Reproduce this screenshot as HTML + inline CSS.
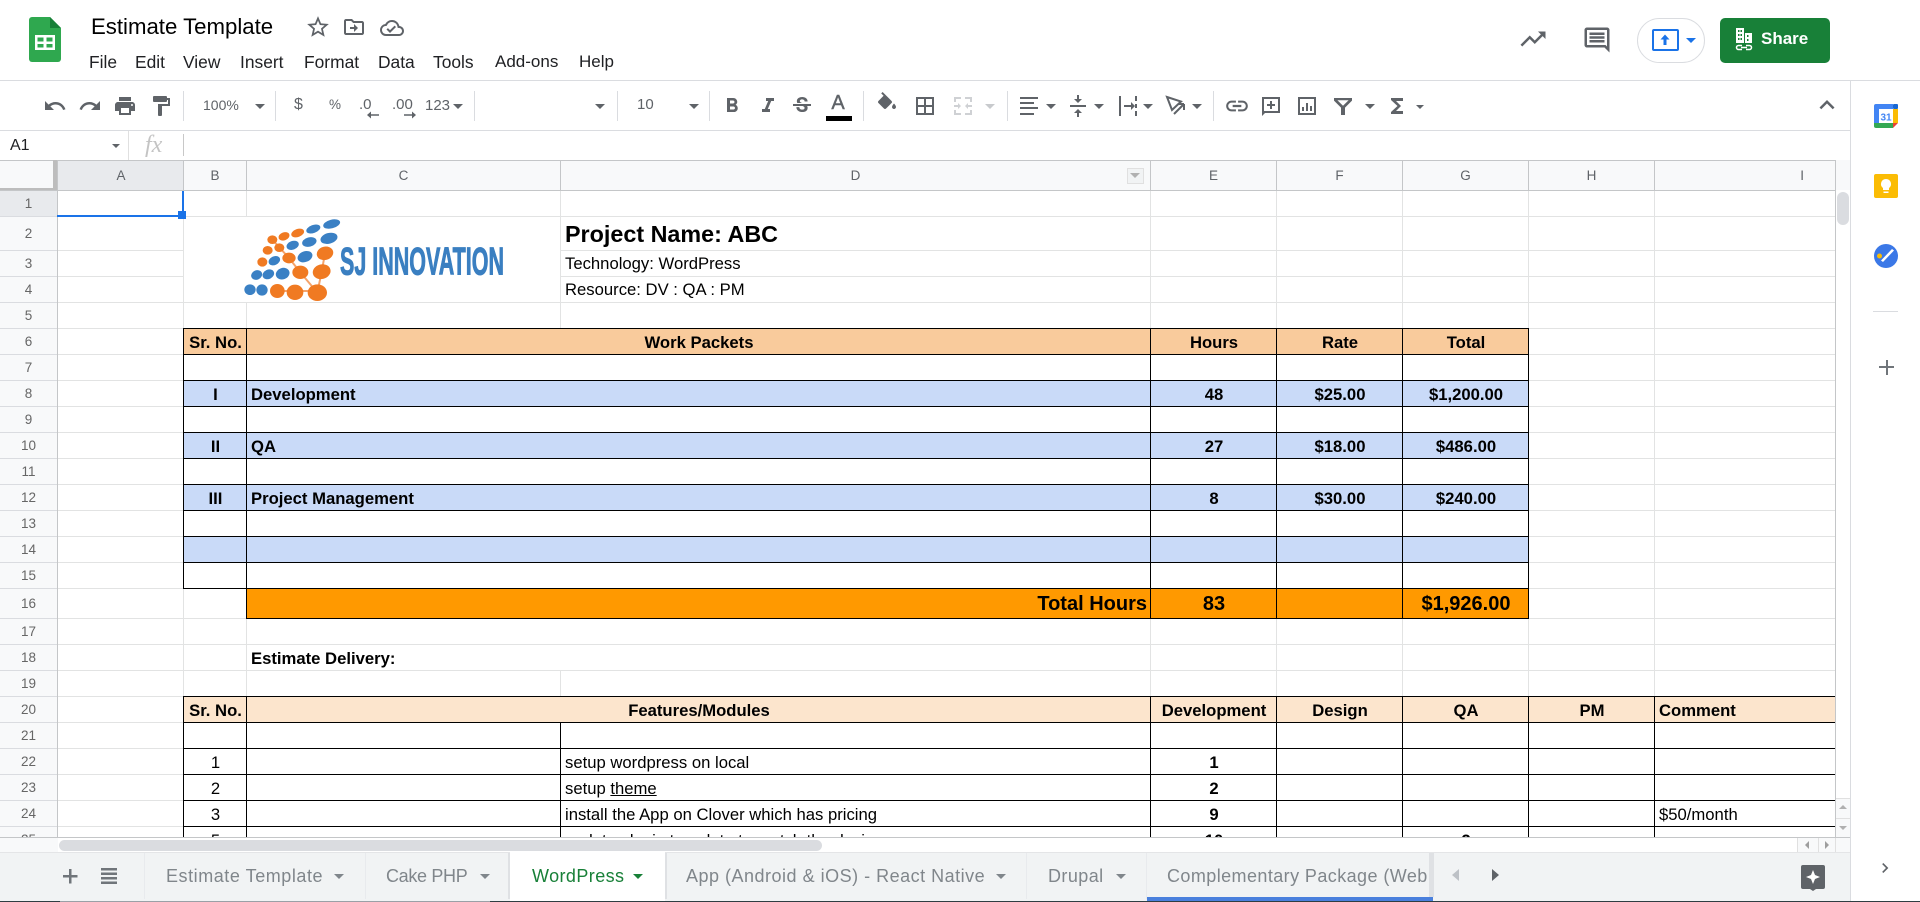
<!DOCTYPE html>
<html lang="en"><head><meta charset="utf-8"><title>Estimate Template</title>
<style>
html,body{margin:0;padding:0;width:1920px;height:902px;overflow:hidden;background:#fff;font-family:"Liberation Sans",sans-serif;color:#000}
div,span,svg{position:absolute;display:block}
u{text-decoration:underline}
.n{white-space:nowrap}
.m{top:51px;height:22px;line-height:22px;font-size:17.4px;color:#202124;white-space:nowrap}
.i{fill:#5f6368}
.a{width:0;height:0;border-left:5px solid transparent;border-right:5px solid transparent;border-top:5px solid #5f6368}
.s{top:91px;width:1px;height:30px;background:#dadce0}
.tb{font-size:14.5px;color:#5f6368;white-space:nowrap;line-height:20px;height:20px}
.ch{top:161px;height:29px;line-height:29px;text-align:center;font-size:13.5px;color:#5f6368;text-indent:1px}
.rh{left:0;width:57px;text-align:center;font-size:13.5px;color:#666}
.c{font-size:16.67px;white-space:nowrap;text-align:center;color:#000;text-indent:2px}
.b{font-weight:700}
.c.l{text-align:left;text-indent:0}
.r26{height:26px;line-height:29px}
.tab{top:864px;height:24px;line-height:24px;font-size:18px;letter-spacing:.42px;color:#80868b;white-space:nowrap}
</style></head><body>

<!-- header -->
<svg style="left:29px;top:17px" width="32" height="45" viewBox="0 0 32 45"><path d="M3 0H21L32 11V42a3 3 0 0 1-3 3H3a3 3 0 0 1-3-3V3a3 3 0 0 1 3-3z" fill="#2fa84f"/><path d="M21 0L32 11H21z" fill="#188038"/><path d="M6 18h20v15H6zM8.500 20.500v4h6v-4zm9 0v4h6v-4zM8.500 27v3.500h6V27zm9 0v3.500h6V27z" fill="#fff" fill-rule="evenodd"/></svg>
<div class="n" style="left:91px;top:14px;height:26px;line-height:26px;font-size:22.2px;color:#000">Estimate Template</div>
<svg style="left:305px;top:14px" width="26" height="26" viewBox="0 0 24 24" class="i"><path d="M22 9.240l-7.190-.62L12 2 9.190 8.630 2 9.240l5.460 4.730L5.820 21 12 17.270 18.180 21l-1.630-7.030L22 9.240zM12 15.400l-3.760 2.270 1-4.280-3.320-2.880 4.380-.38L12 6.100l1.710 4.040 4.380.38-3.320 2.880 1 4.280L12 15.400z"/></svg>
<svg style="left:342px;top:15px" width="24" height="24" viewBox="0 0 24 24" class="i"><path d="M20 6h-8l-2-2H4c-1.100 0-2 .9-2 2v12c0 1.100.9 2 2 2h16c1.100 0 2-.9 2-2V8c0-1.100-.9-2-2-2zm0 12H4V6h5.170l2 2H20v10zm-8-1l4-4-4-4v3H8v2h4z"/></svg>
<svg style="left:380px;top:16px" width="24" height="24" viewBox="0 0 24 24" class="i"><path d="M19.350 10.040A7.490 7.490 0 0012 4C9.110 4 6.600 5.640 5.350 8.040A5.994 5.994 0 000 14c0 3.310 2.690 6 6 6h13c2.760 0 5-2.240 5-5 0-2.640-2.050-4.780-4.650-4.960zM19 18H6c-2.210 0-4-1.790-4-4 0-2.050 1.530-3.760 3.560-3.970l1.070-.11.5-.95A5.469 5.469 0 0112 6c2.620 0 4.880 1.860 5.390 4.430l.3 1.500 1.530.11A2.980 2.980 0 0122 15c0 1.650-1.350 3-3 3zm-9-3.820l-2.090-2.090L6.500 13.500 10 17l6.010-6.010-1.410-1.410z"/></svg>
<div class="m" style="left:89px">File</div><div class="m" style="left:135px">Edit</div><div class="m" style="left:183px">View</div><div class="m" style="left:240px">Insert</div><div class="m" style="left:304px">Format</div><div class="m" style="left:378px">Data</div><div class="m" style="left:433px">Tools</div><div class="m" style="left:495px;font-size:17px">Add-ons</div><div class="m" style="left:579px;font-size:17px">Help</div>

<svg style="left:1518px;top:24px" width="30" height="30" viewBox="0 0 24 24" class="i"><path d="M16 6l2.290 2.290-4.880 4.880-4-4L2 16.590 3.410 18l6-6 4 4 6.300-6.290L22 12V6z"/></svg>
<svg style="left:1582px;top:25px" width="30" height="30" viewBox="0 0 24 24" class="i"><path fill-rule="evenodd" d="M22 4c0-1.100-.9-2-2-2H4c-1.100 0-2 .9-2 2v12c0 1.100.9 2 2 2h14l4 4V4zM20 4v13.170L18.830 16H4V4h16zM6 12h12v2H6zM6 9h12v2H6zM6 6h12v2H6z"/></svg>
<div style="left:1637px;top:18px;width:66px;height:43px;border:1px solid #dadce0;border-radius:23px"></div>
<div style="left:1652px;top:29px;width:23px;height:18px;border:2px solid #1a73e8;border-radius:2px"></div>
<svg style="left:1657px;top:32px" width="16" height="16" viewBox="0 0 16 16"><path d="M8 2.500L3.500 7.500H6.500V13H9.500V7.500H12.500z" fill="#1a73e8"/></svg>
<div class="a" style="left:1686px;top:38px;border-top-color:#1a73e8"></div>
<div style="left:1720px;top:18px;width:110px;height:45px;background:#188038;border-radius:5px"></div>
<svg style="left:1735px;top:27px" width="18" height="24" viewBox="0 0 18 24"><path fill="#fff" fill-rule="evenodd" d="M1 1h8v15H1zM3 3v2h1.500V3zm2.500 0v2H7V3zM3 7v2h1.500V7zm2.500 0v2H7V7zM3 11v2h1.500v-2zm2.500 0v2H7v-2zM10 6h7v10h-7zM12 8v2h1.500V8zm0 4v2h1.500v-2z"/><path fill="none" stroke="#fff" stroke-width="1.500" d="M7 18.500H3.500a2 2 0 0 0 0 4H7M11 18.500h3.500a2 2 0 0 1 0 4H11M6 20.500h6"/></svg>
<div class="n" style="left:1761px;top:28px;height:22px;line-height:22px;font-size:17px;font-weight:700;color:#fff">Share</div>

<div style="left:0;top:80px;width:1920px;height:1px;background:#dadce0"></div>

<!-- toolbar -->
<svg style="left:43px;top:94px" width="24" height="24" viewBox="0 0 24 24" class="i"><path d="M12.500 8c-2.650 0-5.050.99-6.900 2.600L2 7v9h9l-3.620-3.620c1.390-1.160 3.160-1.880 5.120-1.880 3.540 0 6.550 2.310 7.600 5.500l2.370-.78C21.080 11.030 17.150 8 12.500 8z"/></svg>
<svg style="left:78px;top:94px" width="24" height="24" viewBox="0 0 24 24" class="i"><path d="M18.400 10.600C16.550 8.990 14.150 8 11.500 8c-4.650 0-8.580 3.030-9.960 7.220L3.900 16c1.050-3.190 4.050-5.500 7.600-5.500 1.950 0 3.730.72 5.120 1.880L13 16h9V7l-3.600 3.600z"/></svg>
<svg style="left:113px;top:94px" width="24" height="24" viewBox="0 0 24 24" class="i"><path d="M19 8H5c-1.660 0-3 1.340-3 3v6h4v4h12v-4h4v-6c0-1.660-1.340-3-3-3zm-3 11H8v-5h8v5zm3-7c-.55 0-1-.45-1-1s.45-1 1-1 1 .45 1 1-.45 1-1 1zm-1-9H6v4h12V3z"/></svg>
<svg style="left:149px;top:94px" width="24" height="24" viewBox="0 0 24 24" class="i"><path d="M18 4V3c0-.55-.45-1-1-1H5c-.55 0-1 .45-1 1v4c0 .55.45 1 1 1h12c.55 0 1-.45 1-1V6h1v4H9v11c0 .55.45 1 1 1h2c.55 0 1-.45 1-1v-9h8V4h-3z"/></svg>
<div class="s" style="left:183px"></div>
<div class="tb" style="left:203px;top:95px;font-size:14px">100%</div><div class="a" style="left:255px;top:104px"></div>
<div class="s" style="left:275px"></div>
<div class="tb" style="left:294px;top:95px;font-size:16px">$</div>
<div class="tb" style="left:329px;top:95px;font-size:13.5px">%</div>
<div class="tb" style="left:359px;top:95px;font-size:15px">.0</div>
<svg style="left:367px;top:111px" width="12" height="8" viewBox="0 0 12 8"><path d="M12 3.200H4V.5L0 4l4 3.500V4.800h8z" fill="#5f6368"/></svg>
<div class="tb" style="left:392px;top:95px;font-size:15px">.00</div>
<svg style="left:404px;top:111px" width="12" height="8" viewBox="0 0 12 8"><path d="M0 3.200H8V.5L12 4 8 7.500V4.800H0z" fill="#5f6368"/></svg>
<div class="tb" style="left:425px;top:96px;font-size:15px">123</div><div class="a" style="left:453px;top:104px"></div>
<div class="s" style="left:474px"></div>
<div class="a" style="left:595px;top:104px"></div>
<div class="s" style="left:617px"></div>
<div class="tb" style="left:637px;top:95px;font-size:15px">10</div><div class="a" style="left:689px;top:104px"></div>
<div class="s" style="left:709px"></div>
<svg style="left:720px;top:94px" width="24" height="24" viewBox="0 0 24 24" class="i"><path d="M15.600 10.790c.97-.67 1.650-1.770 1.650-2.790 0-2.260-1.750-4-4-4H7v14h7.040c2.090 0 3.710-1.700 3.710-3.790 0-1.520-.86-2.820-2.150-3.420zM10 6.500h3c.83 0 1.500.67 1.500 1.500s-.67 1.500-1.500 1.500h-3v-3zm3.500 9H10v-3h3.500c.83 0 1.500.67 1.500 1.500s-.67 1.500-1.500 1.500z"/></svg>
<svg style="left:756px;top:94px" width="24" height="24" viewBox="0 0 24 24" class="i"><path d="M10 4v3h2.210l-3.420 8H6v3h8v-3h-2.210l3.420-8H18V4z"/></svg>
<svg style="left:790px;top:94px" width="24" height="24" viewBox="0 0 24 24" class="i"><path d="M6.850 7.080C6.850 4.370 9.450 3 12.240 3c1.640 0 3 .49 3.900 1.280.77.65 1.460 1.730 1.460 3.240h-3.010c0-.31-.05-.59-.15-.85-.29-.86-1.200-1.280-2.250-1.280-1.860 0-2.340 1.020-2.340 1.700 0 .48.25.88.74 1.210.38.25.77.48 1.410.7H7.390c-.21-.34-.54-.89-.54-1.920zM21 12v-2H3v2h9.620c1.150.45 1.960.75 1.960 1.970 0 1-.81 1.670-2.280 1.670-1.540 0-2.930-.54-2.930-2.510H6.400c0 .55.08 1.130.24 1.580.81 2.290 3.290 3.300 5.670 3.300 2.270 0 5.300-.89 5.300-4.050 0-.3-.01-1.160-.48-1.940H21V12z"/></svg>
<div class="tb" style="left:828px;top:92px;width:20px;text-align:center;font-size:20px;line-height:22px;height:22px;-webkit-text-stroke:.4px #5f6368">A</div>
<div style="left:826px;top:116px;width:26px;height:5px;background:#000"></div>
<div class="s" style="left:863px"></div>
<svg style="left:875px;top:92px" width="24" height="24" viewBox="0 0 24 24" class="i"><path d="M16.560 8.940L7.620 0 6.210 1.410l2.380 2.380-5.150 5.150c-.59.59-.59 1.540 0 2.120l5.500 5.500c.29.29.68.44 1.060.44s.77-.15 1.060-.44l5.500-5.500c.59-.58.59-1.530 0-2.120zM19 11.500s-2 2.170-2 3.500c0 1.100.9 2 2 2s2-.9 2-2c0-1.330-2-3.500-2-3.500z"/></svg>
<svg style="left:913px;top:94px" width="24" height="24" viewBox="0 0 24 24" class="i"><path d="M3 3v18h18V3H3zm8 16H5v-6h6v6zm0-8H5V5h6v6zm8 8h-6v-6h6v6zm0-8h-6V5h6v6z"/></svg>
<svg style="left:951px;top:94px" width="24" height="24" viewBox="0 0 24 24" fill="#cfd1d4"><path d="M3 3h7v2H5v3H3zM14 3h7v5h-2V5h-5zM3 16h2v3h5v2H3zM19 16h2v5h-7v-2h5zM3 11h4V9l3 3-3 3v-2H3zM21 13h-4v2l-3-3 3-3v2h4z"/></svg>
<div class="a" style="left:985px;top:104px;border-top-color:#c8cacd"></div>
<div class="s" style="left:1007px"></div>
<svg style="left:1017px;top:94px" width="24" height="24" viewBox="0 0 24 24" class="i"><path d="M3 3h18v2H3zM3 8h14v2H3zM3 13h18v2H3zM3 19h14v2H3z"/></svg>
<div class="a" style="left:1046px;top:104px"></div>
<svg style="left:1066px;top:94px" width="24" height="24" viewBox="0 0 24 24" class="i"><path d="M8 19h3v4h2v-4h3l-4-4-4 4zm8-14h-3V1h-2v4H8l4 4 4-4zM4 11v2h16v-2H4z"/></svg>
<div class="a" style="left:1094px;top:104px"></div>
<svg style="left:1116px;top:94px" width="24" height="24" viewBox="0 0 24 24" class="i"><path d="M3 2h2v20H3zM19 2h2v5h-2zM19 10h2v4h-2zM19 17h2v5h-2zM8 11h7V8l4 4-4 4v-3H8z"/></svg>
<div class="a" style="left:1143px;top:104px"></div>
<svg style="left:1163px;top:94px" width="24" height="24" viewBox="0 0 24 24" fill="none" stroke="#5f6368" stroke-width="2"><path d="M4 3l14 4.500-9 8.500zM11 20l10-10M21 10v6M21 10h-6"/></svg>
<div class="a" style="left:1192px;top:104px"></div>
<div class="s" style="left:1213px"></div>
<svg style="left:1224px;top:93px" width="26" height="26" viewBox="0 0 24 24" class="i"><path d="M3.900 12c0-1.710 1.390-3.100 3.100-3.100h4V7H7c-2.760 0-5 2.240-5 5s2.240 5 5 5h4v-1.900H7c-1.710 0-3.100-1.390-3.100-3.100zM8 13h8v-2H8v2zm9-6h-4v1.900h4c1.710 0 3.100 1.390 3.100 3.100s-1.390 3.100-3.100 3.100h-4V17h4c2.760 0 5-2.240 5-5s-2.240-5-5-5z"/></svg>
<svg style="left:1259px;top:94px" width="24" height="24" viewBox="0 0 24 24" class="i"><path fill-rule="evenodd" d="M3 3h18v16H6l-3 3zM5 5v12h14V5zM11 7h2v3h3v2h-3v3h-2v-3H8v-2h3z"/></svg>
<svg style="left:1295px;top:94px" width="24" height="24" viewBox="0 0 24 24" class="i"><path fill-rule="evenodd" d="M3 3h18v18H3zM5 5v14h14V5zM7 13h2v4H7zM11 9h2v8h-2zM15 12h2v5h-2z"/></svg>
<svg style="left:1331px;top:94px" width="24" height="24" viewBox="0 0 24 24" class="i"><path fill-rule="evenodd" d="M3 4h18v2.600l-7 7V21h-4v-7.400l-7-7zM6.400 6.200L12 11.800l5.600-5.600z"/></svg>
<div class="a" style="left:1365px;top:104px"></div>
<svg style="left:1385px;top:94px" width="24" height="24" viewBox="0 0 24 24" class="i"><path d="M18 4H6v2l6.500 6L6 18v2h12v-3h-7l5-5-5-5h7V4z"/></svg>
<div class="a" style="left:1416px;top:105px;border-left-width:4px;border-right-width:4px;border-top-width:4px"></div>
<svg style="left:1812px;top:90px" width="30" height="30" viewBox="0 0 24 24" class="i"><path d="M7.410 15.410L12 10.830l4.590 4.580L18 14l-6-6-6 6z"/></svg>

<div style="left:0;top:130px;width:1850px;height:1px;background:#dadce0"></div>
<!-- formula bar -->
<div class="n" style="left:10px;top:135px;height:22px;line-height:22px;font-size:16px;color:#202124">A1</div>
<div class="a" style="left:112px;top:144px;border-left-width:4px;border-right-width:4px;border-top-width:4px"></div>
<div style="left:128px;top:131px;width:1px;height:29px;background:#e0e0e0"></div>
<div class="n" style="left:145px;top:131px;height:28px;line-height:28px;font-family:'Liberation Serif',serif;font-style:italic;font-size:24px;color:#c4c4c4">fx</div>
<div style="left:183px;top:134px;width:1px;height:22px;background:#c8c8c8"></div>

<!-- column headers -->
<div style="left:0;top:160px;width:1850px;height:30px;background:#f8f9fa"></div>
<div style="left:58px;top:160px;width:125px;height:30px;background:#e8eaed"></div>
<div class="ch" style="left:58px;width:125px">A</div><div class="ch" style="left:183px;width:63px">B</div><div class="ch" style="left:246px;width:314px">C</div><div class="ch" style="left:560px;width:590px">D</div><div class="ch" style="left:1150px;width:126px">E</div><div class="ch" style="left:1276px;width:126px">F</div><div class="ch" style="left:1402px;width:126px">G</div><div class="ch" style="left:1528px;width:126px">H</div><div class="ch" style="left:1654px;width:181px;text-align:right;text-indent:-1px"><span style="position:static;display:inline;margin-right:31px">I</span></div>
<div style="left:1127px;top:168px;width:15px;height:14px;border:1px solid #e0e0e0;background:#f1f3f4"></div>
<div class="a" style="left:1130px;top:173px;border-top-color:#b0b0b0;border-left-width:5px;border-right-width:5px"></div>

<!-- grid bg -->
<div style="left:0;top:190px;width:58px;height:647px;background:#f8f9fa"></div>
<div style="left:0;top:190px;width:57px;height:26px;background:#e8eaed"></div>
<!-- fills -->
<div style="left:183px;top:328px;width:1345px;height:26px;background:#f9cb9c"></div>
<div style="left:183px;top:380px;width:1345px;height:26px;background:#c9daf8"></div>
<div style="left:183px;top:432px;width:1345px;height:26px;background:#c9daf8"></div>
<div style="left:183px;top:484px;width:1345px;height:26px;background:#c9daf8"></div>
<div style="left:183px;top:536px;width:1345px;height:26px;background:#c9daf8"></div>
<div style="left:246px;top:588px;width:1282px;height:30px;background:#ff9900"></div>
<div style="left:183px;top:696px;width:1652px;height:26px;background:#fce5cd"></div>

<svg style="left:0;top:0" width="1920" height="902" viewBox="0 0 1920 902" fill="none">
<path stroke="#e2e3e3" d="M58 216.500H1836M58 250.500H183M560 250.500H1836M58 276.500H183M560 276.500H1836M58 302.500H1836M58 328.500H1836M1528 354.500H1836M58 354.500H183M1528 380.500H1836M58 380.500H183M58 406.500H183M1528 406.500H1836M58 432.500H183M1528 432.500H1836M58 458.500H183M1528 458.500H1836M58 484.500H183M1528 484.500H1836M58 510.500H183M1528 510.500H1836M58 536.500H183M1528 536.500H1836M58 562.500H183M1528 562.500H1836M58 588.500H246M1528 588.500H1836M58 618.500H1836M58 644.500H1836M58 670.500H1836M58 696.500H1836M58 722.500H183M58 748.500H183M58 774.500H183M58 800.500H183M58 826.500H183"/>
<path stroke="#e2e3e3" d="M183.500 190V696M246.500 190V216M246.500 302V328M246.500 618V696M560.500 190V328M560.500 670V696M1150.500 190V328M1276.500 190V328M1402.500 190V328M1528.500 190V696M1654.500 190V696M1150.500 618V696M1276.500 618V696M1402.500 618V696"/>
<path stroke="#c4c6c8" d="M0 160.500H1850M57.500 160V837M0 190.500H1836M183.500 160V190M246.500 160V190M560.500 160V190M1150.500 160V190M1276.500 160V190M1402.500 160V190M1528.500 160V190M1654.500 160V190M1835.500 160V837M0 837.500H1850"/>
<path stroke="#dadce0" d="M0 216.500H57M0 250.500H57M0 276.500H57M0 302.500H57M0 328.500H57M0 354.500H57M0 380.500H57M0 406.500H57M0 432.500H57M0 458.500H57M0 484.500H57M0 510.500H57M0 536.500H57M0 562.500H57M0 588.500H57M0 618.500H57M0 644.500H57M0 670.500H57M0 696.500H57M0 722.500H57M0 748.500H57M0 774.500H57M0 800.500H57M0 826.500H57"/>
<path stroke="#000" d="M183 328.500H1529M183 354.500H1529M183 380.500H1529M183 406.500H1529M183 432.500H1529M183 458.500H1529M183 484.500H1529M183 510.500H1529M183 536.500H1529M183 562.500H1529M183 588.500H1529M246 618.500H1529M183.500 328V589M246.500 328V619M1150.500 328V619M1276.500 328V619M1402.500 328V619M1528.500 328V619"/>
<path stroke="#000" d="M183 696.500H1835M183 722.500H1835M183 748.500H1835M183 774.500H1835M183 800.500H1835M183 826.500H1835M183.500 696V837M246.500 696V837M560.500 722V837M1150.500 696V837M1276.500 696V837M1402.500 696V837M1528.500 696V837M1654.500 696V837"/>
</svg>

<!-- row numbers -->
<div class="rh" style="top:190px;height:26px;line-height:27px">1</div><div class="rh" style="top:216px;height:34px;line-height:35px">2</div><div class="rh" style="top:250px;height:26px;line-height:27px">3</div><div class="rh" style="top:276px;height:26px;line-height:27px">4</div><div class="rh" style="top:302px;height:26px;line-height:27px">5</div><div class="rh" style="top:328px;height:26px;line-height:27px">6</div><div class="rh" style="top:354px;height:26px;line-height:27px">7</div><div class="rh" style="top:380px;height:26px;line-height:27px">8</div><div class="rh" style="top:406px;height:26px;line-height:27px">9</div><div class="rh" style="top:432px;height:26px;line-height:27px">10</div><div class="rh" style="top:458px;height:26px;line-height:27px">11</div><div class="rh" style="top:484px;height:26px;line-height:27px">12</div><div class="rh" style="top:510px;height:26px;line-height:27px">13</div><div class="rh" style="top:536px;height:26px;line-height:27px">14</div><div class="rh" style="top:562px;height:26px;line-height:27px">15</div><div class="rh" style="top:588px;height:30px;line-height:31px">16</div><div class="rh" style="top:618px;height:26px;line-height:27px">17</div><div class="rh" style="top:644px;height:26px;line-height:27px">18</div><div class="rh" style="top:670px;height:26px;line-height:27px">19</div><div class="rh" style="top:696px;height:26px;line-height:27px">20</div><div class="rh" style="top:722px;height:26px;line-height:27px">21</div><div class="rh" style="top:748px;height:26px;line-height:27px">22</div><div class="rh" style="top:774px;height:26px;line-height:27px">23</div><div class="rh" style="top:800px;height:26px;line-height:27px">24</div>
<div style="left:0;top:826px;width:1836px;height:11px;overflow:hidden">
 <div class="rh" style="top:0;height:26px;line-height:27px">25</div>
 <div class="c r26" style="left:183px;width:63px">5</div>
 <div class="c r26 l" style="left:565px">update plugin template to match the design</div>
 <div class="c r26 b" style="left:1150px;width:126px">10</div>
 <div class="c r26 b" style="left:1402px;width:126px">2</div>
</div>

<!-- selection -->
<div style="left:57px;top:215px;width:127px;height:2px;background:#1a73e8"></div>
<div style="left:182px;top:191px;width:2px;height:25px;background:#1a73e8"></div>
<div style="left:178px;top:211px;width:8px;height:8px;background:#1a73e8"></div>
<div style="left:0;top:188px;width:57px;height:2px;background:#bdbdbd"></div>
<div style="left:53px;top:160px;width:4px;height:30px;background:#bdbdbd"></div>

<!-- logo -->
<svg style="left:230px;top:215px" width="300" height="90" viewBox="0 0 900 270">
<g stroke="#f5a36a" stroke-width="6" fill="none"><path d="M127 74L177 129L211 172L262 233M285 115L275 170L262 233M142 228H262"/></g>
<g fill="#3a80c4"><ellipse cx="305" cy="27" rx="26" ry="13" transform="rotate(-15 305 27)"/><ellipse cx="250" cy="42" rx="22" ry="12" transform="rotate(-20 250 42)"/><ellipse cx="297" cy="70" rx="26" ry="16" transform="rotate(-15 297 70)"/><ellipse cx="238" cy="81" rx="22" ry="14" transform="rotate(-15 238 81)"/><ellipse cx="188" cy="91" rx="19" ry="13" transform="rotate(-20 188 91)"/><ellipse cx="225" cy="125" rx="23" ry="16" transform="rotate(-20 225 125)"/><ellipse cx="133" cy="137" rx="18" ry="13" transform="rotate(-25 133 137)"/><ellipse cx="158" cy="176" rx="21" ry="17" transform="rotate(-20 158 176)"/><ellipse cx="115" cy="178" rx="18" ry="14" transform="rotate(-25 115 178)"/><ellipse cx="80" cy="180" rx="17" ry="14" transform="rotate(-25 80 180)"/><ellipse cx="96" cy="225" rx="17" ry="17"/><ellipse cx="60" cy="224" rx="17" ry="16"/></g>
<g fill="#f07a22"><ellipse cx="203" cy="54" rx="20" ry="12" transform="rotate(-20 203 54)"/><ellipse cx="162" cy="64" rx="17" ry="12" transform="rotate(-20 162 64)"/><ellipse cx="127" cy="74" rx="15" ry="13"/><ellipse cx="148" cy="98" rx="15" ry="13"/><ellipse cx="113" cy="106" rx="15" ry="13"/><ellipse cx="285" cy="115" rx="25" ry="20" transform="rotate(-15 285 115)"/><ellipse cx="177" cy="129" rx="20" ry="16"/><ellipse cx="97" cy="141" rx="15" ry="14"/><ellipse cx="275" cy="170" rx="27" ry="22" transform="rotate(-15 275 170)"/><ellipse cx="211" cy="172" rx="24" ry="20"/><ellipse cx="262" cy="233" rx="29" ry="25"/><ellipse cx="195" cy="232" rx="25" ry="23"/><ellipse cx="142" cy="228" rx="22" ry="21"/></g>
<text x="330" y="178" font-family="Liberation Sans" font-weight="700" font-size="116" fill="#3a7fc1" stroke="#3a7fc1" stroke-width="3" textLength="492" lengthAdjust="spacingAndGlyphs">SJ INNOVATION</text>
</svg>

<!-- header text -->
<div class="n b" style="left:565px;top:216px;height:34px;line-height:37px;font-size:23.33px">Project Name: ABC</div>
<div class="c l" style="left:565px;top:250px;height:26px;line-height:28px">Technology: WordPress</div>
<div class="c l" style="left:565px;top:276px;height:26px;line-height:28px">Resource: DV : QA : PM</div>

<!-- table 1 -->
<div class="c b r26" style="left:183px;width:63px;top:328px">Sr. No.</div><div class="c b r26" style="left:246px;width:904px;top:328px">Work Packets</div><div class="c b r26" style="left:1150px;width:126px;top:328px">Hours</div><div class="c b r26" style="left:1276px;width:126px;top:328px">Rate</div><div class="c b r26" style="left:1402px;width:126px;top:328px">Total</div>
<div class="c b r26" style="left:183px;width:63px;top:380px">I</div><div class="c b r26 l" style="left:251px;top:380px">Development</div><div class="c b r26" style="left:1150px;width:126px;top:380px">48</div><div class="c b r26" style="left:1276px;width:126px;top:380px">$25.00</div><div class="c b r26" style="left:1402px;width:126px;top:380px">$1,200.00</div>
<div class="c b r26" style="left:183px;width:63px;top:432px">II</div><div class="c b r26 l" style="left:251px;top:432px">QA</div><div class="c b r26" style="left:1150px;width:126px;top:432px">27</div><div class="c b r26" style="left:1276px;width:126px;top:432px">$18.00</div><div class="c b r26" style="left:1402px;width:126px;top:432px">$486.00</div>
<div class="c b r26" style="left:183px;width:63px;top:484px">III</div><div class="c b r26 l" style="left:251px;top:484px">Project Management</div><div class="c b r26" style="left:1150px;width:126px;top:484px">8</div><div class="c b r26" style="left:1276px;width:126px;top:484px">$30.00</div><div class="c b r26" style="left:1402px;width:126px;top:484px">$240.00</div>
<div class="c b" style="left:246px;width:901px;top:588px;height:30px;line-height:32px;font-size:20px;text-align:right;text-indent:0">Total Hours</div><div class="c b" style="left:1150px;width:126px;top:588px;height:30px;line-height:32px;font-size:20px">83</div><div class="c b" style="left:1402px;width:126px;top:588px;height:30px;line-height:32px;font-size:20px">$1,926.00</div>
<div class="c b r26 l" style="left:251px;top:644px">Estimate Delivery:</div>

<!-- table 2 -->
<div class="c b r26" style="left:183px;width:63px;top:696px">Sr. No.</div><div class="c b r26" style="left:246px;width:904px;top:696px">Features/Modules</div><div class="c b r26" style="left:1150px;width:126px;top:696px">Development</div><div class="c b r26" style="left:1276px;width:126px;top:696px">Design</div><div class="c b r26" style="left:1402px;width:126px;top:696px">QA</div><div class="c b r26" style="left:1528px;width:126px;top:696px">PM</div><div class="c b r26 l" style="left:1659px;top:696px">Comment</div>
<div class="c r26" style="left:183px;width:63px;top:748px">1</div><div class="c r26 l" style="left:565px;top:748px">setup wordpress on local</div><div class="c b r26" style="left:1150px;width:126px;top:748px">1</div>
<div class="c r26" style="left:183px;width:63px;top:774px">2</div><div class="c r26 l" style="left:565px;top:774px">setup <u>theme</u></div><div class="c b r26" style="left:1150px;width:126px;top:774px">2</div>
<div class="c r26" style="left:183px;width:63px;top:800px">3</div><div class="c r26 l" style="left:565px;top:800px">install the App on Clover which has pricing</div><div class="c b r26" style="left:1150px;width:126px;top:800px">9</div><div class="c r26 l" style="left:1659px;top:800px">$50/month</div>

<!-- scrollbars -->
<div style="left:1836px;top:160px;width:14px;height:30px;background:#f8f9fa"></div>
<div style="left:1836px;top:190px;width:14px;height:647px;background:#fff"></div>
<div style="left:1837px;top:192px;width:12px;height:33px;background:#dadce0;border-radius:6px"></div>
<div style="left:1836px;top:798px;width:14px;height:39px;background:#f8f9fa"></div>
<div style="left:1836px;top:798px;width:14px;height:1px;background:#e0e0e0"></div>
<div style="left:1836px;top:818px;width:14px;height:1px;background:#e0e0e0"></div>
<div style="left:1839px;top:805px;width:0;height:0;border-left:4px solid transparent;border-right:4px solid transparent;border-bottom:4px solid #b0b0b0"></div>
<div style="left:1839px;top:826px;width:0;height:0;border-left:4px solid transparent;border-right:4px solid transparent;border-top:4px solid #b0b0b0"></div>
<div style="left:0;top:838px;width:1850px;height:14px;background:#fff"></div>
<div style="left:0;top:838px;width:58px;height:14px;background:#f8f9fa"></div>
<div style="left:59px;top:840px;width:763px;height:11px;background:#dadce0;border-radius:6px"></div>
<div style="left:1797px;top:838px;width:38px;height:14px;background:#f8f9fa"></div>
<div style="left:1835px;top:838px;width:15px;height:14px;background:#f8f9fa"></div>
<div style="left:1797px;top:838px;width:1px;height:14px;background:#e0e0e0"></div>
<div style="left:1818px;top:838px;width:1px;height:14px;background:#e0e0e0"></div>
<div style="left:1835px;top:838px;width:1px;height:14px;background:#e0e0e0"></div>
<div style="left:1805px;top:841px;width:0;height:0;border-top:4px solid transparent;border-bottom:4px solid transparent;border-right:4px solid #9e9e9e"></div>
<div style="left:1825px;top:841px;width:0;height:0;border-top:4px solid transparent;border-bottom:4px solid transparent;border-left:4px solid #9e9e9e"></div>

<!-- tab bar -->
<div style="left:0;top:852px;width:1850px;height:49px;background:#f1f3f4;border-top:1px solid #e4e5e7;box-sizing:border-box"></div>
<svg style="left:58px;top:864px" width="24" height="24" viewBox="0 0 24 24"><path d="M11 5h2.500v6H19.500v2.500h-6V19.500H11v-6H5V11h6z" fill="#70757a"/></svg>
<svg style="left:97px;top:864px" width="24" height="24" viewBox="0 0 24 24"><path d="M4 4h16v2.500H4zM4 8.500h16V11H4zM4 13h16v2.500H4zM4 17.500h16V20H4z" fill="#70757a"/></svg>
<div style="left:144px;top:853px;width:1px;height:46px;background:#e8eaed"></div>
<div style="left:365px;top:853px;width:1px;height:46px;background:#e8eaed"></div>
<div style="left:1026px;top:853px;width:1px;height:46px;background:#e8eaed"></div>
<div style="left:1146px;top:853px;width:1px;height:46px;background:#e8eaed"></div>
<div style="left:508px;top:853px;width:159px;height:46px;background:#dfe1e4"></div>
<div style="left:510px;top:852px;width:155px;height:49px;background:#fff"></div>
<div class="tab" style="left:166px;letter-spacing:.55px">Estimate Template</div><div class="a" style="left:334px;top:874px;border-top-color:#80868b"></div>
<div class="tab" style="left:386px;letter-spacing:-.33px">Cake PHP</div><div class="a" style="left:480px;top:874px;border-top-color:#80868b"></div>
<div class="tab" style="left:532px;color:#188038">WordPress</div><div class="a" style="left:633px;top:874px;border-top-color:#188038"></div>
<div class="tab" style="left:686px;letter-spacing:.5px">App (Android &amp; iOS) - React Native</div><div class="a" style="left:996px;top:874px;border-top-color:#80868b"></div>
<div class="tab" style="left:1048px">Drupal</div><div class="a" style="left:1116px;top:874px;border-top-color:#80868b"></div>
<div style="left:1147px;top:853px;width:282px;height:48px;overflow:hidden"><div class="tab" style="left:20px;top:11px">Complementary Package (Web Design)</div></div>
<div style="left:1147px;top:897px;width:286px;height:4px;background:#4a80dd"></div>
<div style="left:1429px;top:853px;width:5px;height:44px;background:#dfe1e4"></div>
<div style="left:1452px;top:869px;width:0;height:0;border-top:6px solid transparent;border-bottom:6px solid transparent;border-right:7px solid #bdc1c6"></div>
<div style="left:1492px;top:869px;width:0;height:0;border-top:6px solid transparent;border-bottom:6px solid transparent;border-left:7px solid #5f6368"></div>
<svg style="left:1801px;top:865px" width="24" height="26" viewBox="0 0 24 26"><path d="M2 0H22a2 2 0 0 1 2 2V22a2 2 0 0 1-2 2H15L12 26 9 24H2a2 2 0 0 1-2-2V2A2 2 0 0 1 2 0z" fill="#5f6368"/><path d="M12 5l2 5 5 2-5 2-2 5-2-5-5-2 5-2z" fill="#fff"/></svg>
<div style="left:0;top:901px;width:1920px;height:1px;background:#2f3d42"></div>
<div style="left:60px;top:901px;width:430px;height:1px;background:#9aa0a6"></div>

<!-- right panel -->
<div style="left:1850px;top:81px;width:1px;height:820px;background:#dadce0"></div>
<svg style="left:1874px;top:104px" width="24" height="24" viewBox="0 0 24 24"><path d="M2 0H19V5H5V19H0V2A2 2 0 0 1 2 0z" fill="#4285f4"/><rect x="19" y="0" width="5" height="5" rx="1" fill="#1967d2"/><rect x="19" y="5" width="5" height="14" fill="#fbbc04"/><path d="M0 19H19V24H2A2 2 0 0 1 0 22z" fill="#34a853"/><path d="M19 19H24L19 24z" fill="#ea4335"/><rect x="5" y="5" width="14" height="14" fill="#fff"/><text x="12" y="16.500" text-anchor="middle" font-family="Liberation Sans" font-weight="700" font-size="10" fill="#4285f4">31</text></svg>
<svg style="left:1874px;top:174px" width="24" height="24" viewBox="0 0 24 24"><rect width="24" height="24" rx="2" fill="#fbbc04"/><path d="M12 5a5 5 0 0 0-3 9v2h6v-2a5 5 0 0 0-3-9zM9.500 17.500h5V19h-5z" fill="#fff"/></svg>
<svg style="left:1874px;top:244px" width="24" height="24" viewBox="0 0 24 24"><circle cx="12" cy="12" r="12" fill="#3b78e7"/><path d="M20 6.500L9 18l-2-1.500L18 5z" fill="#fff"/><circle cx="5.500" cy="12" r="2.500" fill="#fbbc04"/></svg>
<div style="left:1873px;top:311px;width:25px;height:1px;background:#dadce0"></div>
<div style="left:1879px;top:366px;width:15px;height:2px;background:#70757a"></div>
<div style="left:1885.500px;top:360px;width:2px;height:15px;background:#70757a"></div>
<svg style="left:1875px;top:858px" width="20" height="20" viewBox="0 0 24 24"><path d="M8.590 16.590L13.170 12 8.590 7.410 10 6l6 6-6 6z" fill="#5f6368"/></svg>
</body></html>
